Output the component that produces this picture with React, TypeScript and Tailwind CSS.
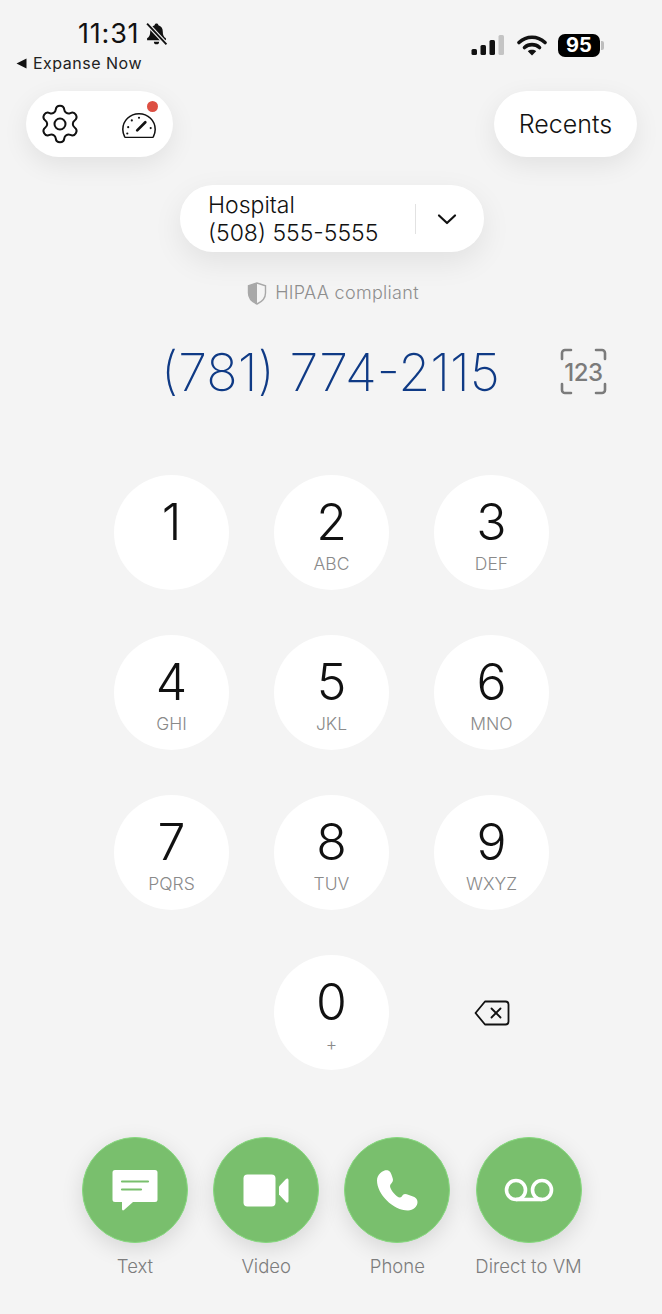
import { Settings } from "lucide-react";

const font = { fontFamily: "Inter, 'Noto Sans', sans-serif" };

const keys = [
  ["1", ""], ["2", "ABC"], ["3", "DEF"],
  ["4", "GHI"], ["5", "JKL"], ["6", "MNO"],
  ["7", "PQRS"], ["8", "TUV"], ["9", "WXYZ"],
];

function Key({ d, s }: { d: string; s: string }) {
  return (
    <div className="w-[115px] h-[115px] rounded-full bg-white flex flex-col items-center pt-[22px]">
      <div className="text-[50px] leading-[50px] font-light text-[#111]">{d}</div>
      <div className="mt-[7px] text-[17.5px] leading-[20px] font-light text-[#8a8a8a]">{s}</div>
    </div>
  );
}

function Action({ label, children }: { label: string; children: React.ReactNode }) {
  return (
    <div className="w-[106px] flex flex-col items-center">
      <div className="w-[106px] h-[106px] rounded-full bg-[#79bf6d] border border-[#86d97e] flex items-center justify-center shadow-[0_6px_22px_rgba(0,0,0,0.12)]">
        {children}
      </div>
      <div className="mt-[12px] text-[18.5px] leading-[22px] font-light text-[#7d7d7d] whitespace-nowrap">{label}</div>
    </div>
  );
}

export default function App() {
  return (
    <div style={font} className="w-[662px] h-[1314px] bg-[#f4f4f4] overflow-hidden flex flex-col">
      {/* status bar */}
      <div className="h-[91px] flex justify-between">
        <div className="pl-[16px] pt-[18px]">
          <div className="flex items-center pl-[62px]">
            <span className="text-[27px] leading-[32px] font-normal tracking-[0.8px] text-[#111]">11:31</span>
            <svg className="ml-[6px]" width="23" height="24" viewBox="0 0 22 22">
              <path d="M11 1c1 0 1.700.6 1.800 1.600 2.800.8 4.200 3 4.200 5.900 0 3.500 1 5.200 3 6.600V17H2v-1.900c2-1.400 3-3.100 3-6.600 0-2.900 1.400-5.100 4.200-5.900C9.300 1.600 10 1 11 1z" fill="#111" />
              <path d="M8.500 18.300h5a2.500 2.500 0 0 1-5 0z" fill="#111" />
              <path d="M2 1 20.500 21" stroke="#f4f4f4" strokeWidth="4" />
              <path d="M2 1 20.500 21" stroke="#111" strokeWidth="1.800" />
            </svg>
          </div>
          <div className="flex items-center mt-[2px]">
            <svg width="11" height="11" viewBox="0 0 11 11"><path d="M0.500 5.500 10.500 0.500V10.500z" fill="#111" /></svg>
            <span className="ml-[6px] text-[16px] leading-[22px] tracking-[0.5px] text-[#222]">Expanse Now</span>
          </div>
        </div>
        <div className="flex items-start pt-[34px] pr-[58px]">
          <svg width="34" height="22" viewBox="0 0 34 22">
            <rect x="0.500" y="15" width="5.500" height="6" rx="1.500" fill="#111" />
            <rect x="9.500" y="11" width="5.500" height="10" rx="1.500" fill="#111" />
            <rect x="18.500" y="6" width="5.500" height="15" rx="1.500" fill="#111" />
            <rect x="27.500" y="1" width="5.500" height="20" rx="1.500" fill="#c4c4c4" />
          </svg>
          <svg className="ml-[12px]" width="30" height="22" viewBox="0 0 30 22">
            <path d="M2 8.500C9.500 1.500 20.500 1.500 28 8.500" stroke="#111" strokeWidth="3.600" fill="none" strokeLinecap="round" />
            <path d="M7.500 13.500C11.800 9.700 18.200 9.700 22.500 13.500" stroke="#111" strokeWidth="3.600" fill="none" strokeLinecap="round" />
            <path d="M15 21.500 10.800 17.200C13.300 15.300 16.700 15.300 19.200 17.200z" fill="#111" />
          </svg>
          <div className="ml-[11px] w-[42px] h-[23px] rounded-[7px] bg-black text-white text-[20px] leading-[23px] font-bold text-center">95</div>
          <div className="ml-[1px] mt-[7px] w-[3px] h-[9px] rounded-r-[2px] bg-[#bdbdbd]" />
        </div>
      </div>

      {/* top buttons */}
      <div className="flex justify-between pl-[26px] pr-[25px]">
        <div className="w-[147px] h-[66px] rounded-[33px] bg-white shadow-[0_8px_26px_rgba(0,0,0,0.08)] flex items-center pl-[12px]">
          <Settings size={44} strokeWidth={1.1} color="#111" />
          <div className="relative ml-[39px]">
            <svg width="36" height="27" viewBox="0 0 38 30" fill="none">
              <path d="M3 28.500C1.500 25.500 1 23.500 1 20.500 1 10.500 9 3 19 3s18 7.500 18 17.500c0 3-.500 5-2 8-.300.500-.800 1-1.500 1h-29c-.700 0-1.200-.500-1.500-1z" stroke="#111" strokeWidth="1.700" />
              <path d="M17 21.500 26 12.500" stroke="#111" strokeWidth="3" strokeLinecap="round" />
              <circle cx="7" cy="18" r="1.200" fill="#111" />
              <circle cx="11" cy="10.500" r="1.200" fill="#111" />
              <circle cx="19" cy="7.500" r="1.200" fill="#111" />
              <circle cx="32" cy="19" r="1.200" fill="#111" />
              <circle cx="6" cy="25" r="1.200" fill="#111" />
            </svg>
            <div className="absolute -top-[10px] right-[-1px] w-[11px] h-[11px] rounded-full bg-[#dd4f42]" />
          </div>
        </div>
        <div className="w-[143px] h-[66px] rounded-[33px] bg-white shadow-[0_8px_26px_rgba(0,0,0,0.08)] flex items-center justify-center pt-[2px] text-[25px] font-light text-[#111]">
          Recents
        </div>
      </div>

      {/* line selector */}
      <div className="mt-[28px] flex justify-center pl-[2px]">
        <div className="w-[304px] h-[67px] rounded-[33px] bg-white shadow-[0_10px_30px_rgba(0,0,0,0.08)] flex items-center pl-[28px]">
          <div className="w-[207px] text-[23px] leading-[28px] font-light text-[#111]">
            <div>Hospital</div>
            <div className="whitespace-nowrap">(508) 555-5555</div>
          </div>
          <div className="w-px h-[30px] bg-[#e2e2e2]" />
          <svg className="ml-[21px]" width="20" height="14" viewBox="0 0 20 14" fill="none">
            <path d="M2 3.500 10 11 18 3.500" stroke="#111" strokeWidth="2.200" strokeLinecap="round" strokeLinejoin="round" />
          </svg>
        </div>
      </div>

      {/* hipaa */}
      <div className="mt-[29px] flex justify-center items-center pl-[4px]">
        <svg width="20" height="23" viewBox="0 0 20 23">
          <path d="M10 1 1.500 3.800v7.200c0 5 3.500 8.800 8.500 11 5-2.200 8.500-6 8.500-11V3.800z" fill="#f4f4f4" stroke="#a8a8a8" strokeWidth="1.400" />
          <path d="M10 1 1.500 3.800v7.200c0 5 3.500 8.800 8.500 11z" fill="#a8a8a8" />
        </svg>
        <span className="ml-[8px] text-[18px] leading-[24px] font-light tracking-[0.3px] text-[#8e8e8e]">HIPAA compliant</span>
      </div>

      {/* number */}
      <div className="mt-[35px] h-[62px] flex items-center pl-[161px]">
        <span className="w-[399px] pt-[4px] text-[52px] leading-[62px] font-extralight text-[#0f3a85] whitespace-nowrap">(781) 774-2115</span>
        <div className="relative w-[47px] h-[47px] flex items-center justify-center pt-[3px]">
          <svg className="absolute inset-0" width="47" height="47" viewBox="0 0 47 47" fill="none">
            <path d="M2 11V5a3 3 0 0 1 3-3h6M36 2h6a3 3 0 0 1 3 3v6M45 36v6a3 3 0 0 1-3 3h-6M11 45H5a3 3 0 0 1-3-3v-6" stroke="#7b7b7b" strokeWidth="2.600" strokeLinecap="round" />
          </svg>
          <span className="text-[24px] leading-[28px] font-medium text-[#7b7b7b] tracking-[-0.5px]">123</span>
        </div>
      </div>

      {/* keypad */}
      <div className="mt-[73px] pl-[114px] grid grid-cols-[115px_115px_115px] gap-x-[45px] gap-y-[45px]">
        {keys.map(([d, s]) => (
          <Key key={d} d={d} s={s} />
        ))}
        <div />
        <Key d="0" s="+" />
        <div className="flex items-center justify-center">
          <svg width="36" height="26" viewBox="0 0 36 26" fill="none">
            <path d="M11 1.500h20.500a3 3 0 0 1 3 3v17a3 3 0 0 1-3 3H11L1.500 13z" stroke="#111" strokeWidth="1.800" strokeLinejoin="round" />
            <path d="M17.500 8.500 26.500 17.500M26.500 8.500 17.500 17.500" stroke="#111" strokeWidth="1.800" strokeLinecap="round" />
          </svg>
        </div>
      </div>

      {/* actions */}
      <div className="mt-[67px] pl-[82px] flex gap-x-[25.2px]">
        <Action label="Text">
          <svg width="46" height="42" viewBox="0 0 46 42">
            <path d="M3 1h40a2.500 2.500 0 0 1 2.500 2.500v27a2.500 2.500 0 0 1-2.500 2.500H21l-9 8c-1 .8-2 .3-2-1v-7H3A2.500 2.500 0 0 1 .5 30.500v-27A2.500 2.500 0 0 1 3 1z" fill="#fff" />
            <path d="M10 12.500h26M10 20.500h19" stroke="#79bf6d" strokeWidth="2.200" strokeLinecap="round" />
          </svg>
        </Action>
        <Action label="Video">
          <svg width="46" height="33" viewBox="0 0 46 33">
            <rect x="0.500" y="0.500" width="32" height="32" rx="4" fill="#fff" />
            <path d="M36 12.500 43 5c1-1 2.500-.500 2.500 1v21c0 1.500-1.500 2-2.500 1l-7-7.500z" fill="#fff" />
          </svg>
        </Action>
        <Action label="Phone">
          <svg width="42" height="42" viewBox="0 0 42 42">
            <path d="M10.500 1C7 1.500 1 5 1 11.500 1 25 17 41.500 32 41.500c5 0 9.500-4 9.500-8.500 0-3-2-4.500-4.500-5.500-2.500-1-6-2.500-8-2.500-2.500 0-3 3.500-5 3.500-3.500 0-10-8-10-11.500 0-2 3-3.500 3-6 0-1.500-1.500-5.500-2.500-7.500-1-1.700-2.700-2.800-5-2.500z" fill="#fff" />
          </svg>
        </Action>
        <Action label="Direct to VM">
          <svg width="50" height="26" viewBox="0 0 50 26" fill="none">
            <circle cx="12" cy="13" r="9.500" stroke="#fff" strokeWidth="3.600" />
            <circle cx="38" cy="13" r="9.500" stroke="#fff" strokeWidth="3.600" />
            <path d="M12 22.500h26" stroke="#fff" strokeWidth="3.600" />
          </svg>
        </Action>
      </div>
    </div>
  );
}
